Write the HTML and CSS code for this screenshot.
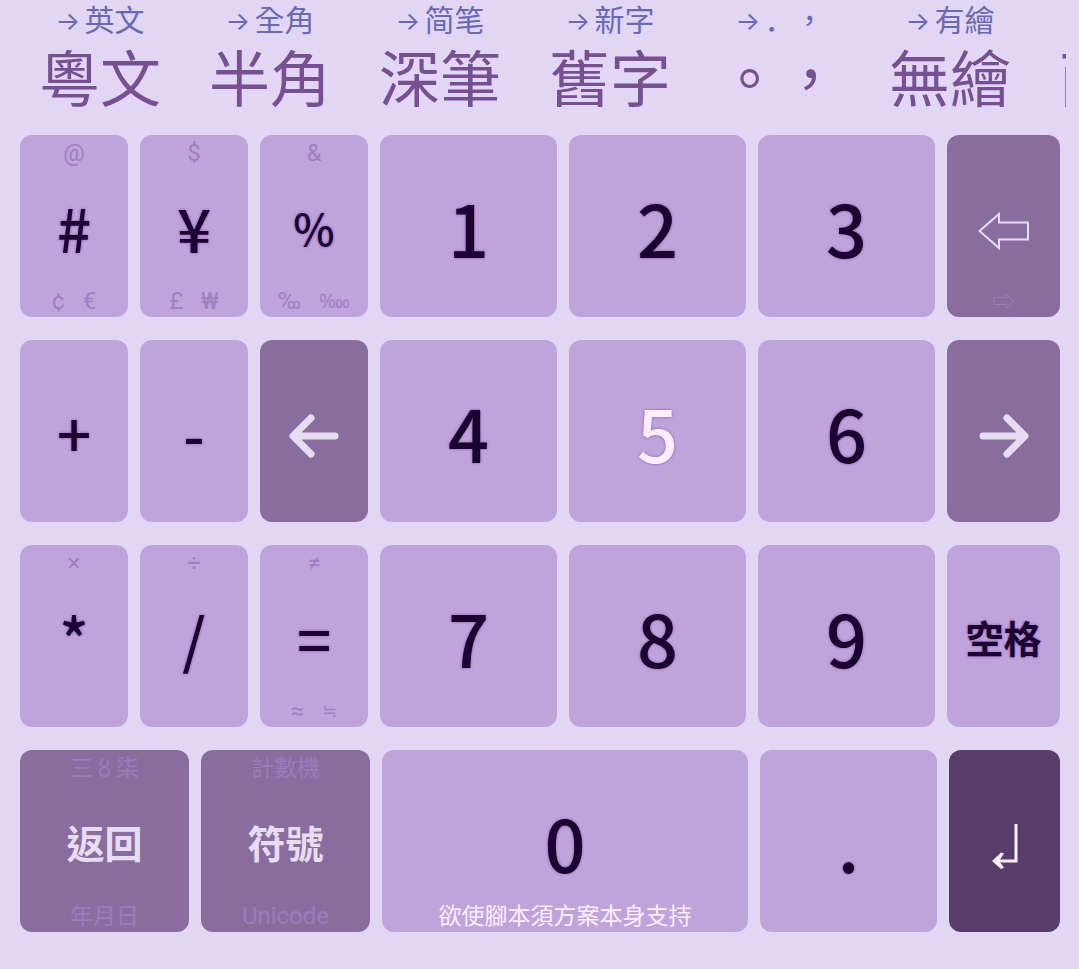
FILE: index.html
```
<!DOCTYPE html>
<html lang="zh-Hant">
<head>
<meta charset="utf-8">
<title>數字鍵盤</title>
<link rel="stylesheet" href="styles.css">
</head>
<body>
<nav class="options">
  <button class="option"><span class="next"><span class="arrow">→</span>英文</span><span class="current">粵文</span></button>
  <button class="option"><span class="next"><span class="arrow">→</span>全角</span><span class="current">半角</span></button>
  <button class="option"><span class="next" lang="zh-Hans"><span class="arrow">→</span>简笔</span><span class="current">深筆</span></button>
  <button class="option"><span class="next"><span class="arrow">→</span>新字</span><span class="current">舊字</span></button>
  <button class="option"><span class="next"><span class="arrow">→</span><span class="sc">．</span>，</span><span class="current">。，</span></button>
  <button class="option"><span class="next"><span class="arrow">→</span>有繪</span><span class="current">無繪</span></button>
  <button class="option"><span class="next"></span><span class="current">面板</span></button>
</nav>
<main class="keyboard">
  <div class="row">
    <button class="key"><span class="hint">@</span><span class="label symbol">#</span><span class="hint"><span>¢</span><span>€</span></span></button>
    <button class="key"><span class="hint">$</span><span class="label symbol">¥</span><span class="hint"><span>£</span><span>₩</span></span></button>
    <button class="key"><span class="hint">&amp;</span><span class="label symbol percent">%</span><span class="hint"><span>‰</span><span class="permyriad">‱</span></span></button>
    <button class="key"><span class="hint"></span><span class="label">1</span><span class="hint"></span></button>
    <button class="key"><span class="hint"></span><span class="label">2</span><span class="hint"></span></button>
    <button class="key"><span class="hint"></span><span class="label">3</span><span class="hint"></span></button>
    <button class="key function" aria-label="退格"><span class="hint"></span>
      <span class="label icon"><svg width="52" height="40" viewBox="0 0 52 40"><path d="M1.500 20 21 3V11.500H50V28.500H21V37Z" fill="none" stroke="currentColor" stroke-width="2"/></svg></span>
      <span class="hint"><svg width="22" height="16" viewBox="0 0 22 16"><path d="M21 8 13 1V4.500H1V11.500H13V15Z" fill="none" stroke="currentColor"/></svg></span></button>
  </div>
  <div class="row">
    <button class="key"><span class="hint"></span><span class="label symbol">+</span><span class="hint"></span></button>
    <button class="key"><span class="hint"></span><span class="label symbol">-</span><span class="hint"></span></button>
    <button class="key function" aria-label="左"><span class="hint"></span>
      <span class="label icon"><svg width="50" height="44" viewBox="0 0 50 44"><path d="M46 22H5M22 4 4 22 22 40" fill="none" stroke="currentColor" stroke-width="7" stroke-linecap="round" stroke-linejoin="round"/></svg></span>
      <span class="hint"></span></button>
    <button class="key"><span class="hint"></span><span class="label">4</span><span class="hint"></span></button>
    <button class="key"><span class="hint"></span><span class="label light">5</span><span class="hint"></span></button>
    <button class="key"><span class="hint"></span><span class="label">6</span><span class="hint"></span></button>
    <button class="key function" aria-label="右"><span class="hint"></span>
      <span class="label icon"><svg width="50" height="44" viewBox="0 0 50 44"><path d="M4 22H45M28 4 46 22 28 40" fill="none" stroke="currentColor" stroke-width="7" stroke-linecap="round" stroke-linejoin="round"/></svg></span>
      <span class="hint"></span></button>
  </div>
  <div class="row">
    <button class="key"><span class="hint">×</span><span class="label symbol">*</span><span class="hint"></span></button>
    <button class="key"><span class="hint">÷</span><span class="label symbol">/</span><span class="hint"></span></button>
    <button class="key"><span class="hint">≠</span><span class="label symbol">=</span><span class="hint"><span>≈</span><span class="math">≒</span></span></button>
    <button class="key"><span class="hint"></span><span class="label">7</span><span class="hint"></span></button>
    <button class="key"><span class="hint"></span><span class="label">8</span><span class="hint"></span></button>
    <button class="key"><span class="hint"></span><span class="label">9</span><span class="hint"></span></button>
    <button class="key"><span class="hint"></span><span class="label word">空格</span><span class="hint"></span></button>
  </div>
  <div class="row bottom">
    <button class="key function"><span class="hint cjk">三〥柒</span><span class="label word">返回</span><span class="hint cjk">年月日</span></button>
    <button class="key function"><span class="hint cjk">計數機</span><span class="label word">符號</span><span class="hint">Unicode</span></button>
    <button class="key"><span class="hint"></span><span class="label">0</span><span class="hint cjk notice">欲使腳本須方案本身支持</span></button>
    <button class="key"><span class="hint"></span><span class="label">.</span><span class="hint"></span></button>
    <button class="key enter" aria-label="換行"><span class="hint"></span>
      <span class="label icon"><svg width="28" height="48" viewBox="0 0 28 48"><path d="M25 2V39H7" fill="none" stroke="currentColor" stroke-width="3"/><path d="M1 39 10 30.500 13 31.500 8 39 13 45.500 10 47Z" fill="currentColor"/></svg></span>
      <span class="hint"></span></button>
  </div>
</main>
</body>
</html>
```

FILE: styles.css
```
* { box-sizing: border-box; }

body {
  margin: 0;
  min-height: 100vh;
  display: flex;
  flex-direction: column;
  background: #e2d6f5;
  font-family: "Noto Sans CJK TC", sans-serif;
}

button {
  border: 0;
  padding: 0;
  font: inherit;
  color: inherit;
  cursor: pointer;
}

.options {
  display: flex;
  height: 135px;
  margin: 0 13px 0 15px;
  overflow-x: clip;
}

.option {
  flex: 0 0 170px;
  display: flex;
  flex-direction: column;
  align-items: center;
  justify-content: flex-start;
  background: none;
}

.next {
  display: flex;
  align-items: center;
  height: 36px;
  font-size: 30px;
  line-height: 36px;
  color: #6a69b3;
}

.arrow {
  margin-right: 4px;
  padding-top: 6px;
  font-family: Inter, sans-serif;
  font-size: 26px;
}

.sc { font-family: "Noto Sans CJK SC", sans-serif; }

.current {
  font-size: 61px;
  line-height: 80px;
  color: #765091;
  white-space: nowrap;
}

.keyboard {
  flex: 1;
  display: grid;
  grid-auto-rows: 1fr;
  gap: 23px;
  padding: 0 19px 37px 20px;
}

.row {
  display: grid;
  grid-template-columns: 108fr 108fr 108fr 177fr 177fr 177fr 113fr;
  gap: 12px;
}

.row.bottom { grid-template-columns: 169fr 169fr 366fr 177fr 111fr; }

.key {
  display: flex;
  flex-direction: column;
  min-width: 0;
  padding: 4px 0 2px;
  border-radius: 12px;
  background: #bfa4db;
  color: #1a0030;
}

.hint {
  display: flex;
  justify-content: center;
  align-items: center;
  align-self: stretch;
  gap: 18px;
  height: 28px;
  font-family: Roboto, "Noto Sans CJK TC", sans-serif;
  font-size: 24px;
  line-height: 28px;
  color: #a07fc1;
}

.cjk {
  font-family: "Noto Sans CJK TC", sans-serif;
  font-size: 23px;
  line-height: 24px;
  align-items: flex-start;
}

.math {
  font-family: "DejaVu Sans", sans-serif;
  font-size: 18px;
}

.permyriad { font-size: 20px; }

.notice { color: #fdeeff; }

.label {
  flex: 1;
  display: flex;
  justify-content: center;
  align-items: center;
  align-self: stretch;
  font-family: "Noto Sans CJK TC", sans-serif;
  font-size: 72px;
  font-weight: 500;
  line-height: 80px;
  text-shadow: 0 0 3px #8a55b0;
}

.symbol { font-size: 60px; }
.percent { font-size: 44px; }
.light { color: #fdeeff; }
.word { font-size: 38px; font-weight: 700; }
.icon { padding-top: 8px; }

.function { background: #8a6d9f; color: #e7ddf0; }
.function .label { text-shadow: none; }
.function .hint { color: #9a7cbb; }
.enter { background: #583c69; color: #fdeeff; }
```
